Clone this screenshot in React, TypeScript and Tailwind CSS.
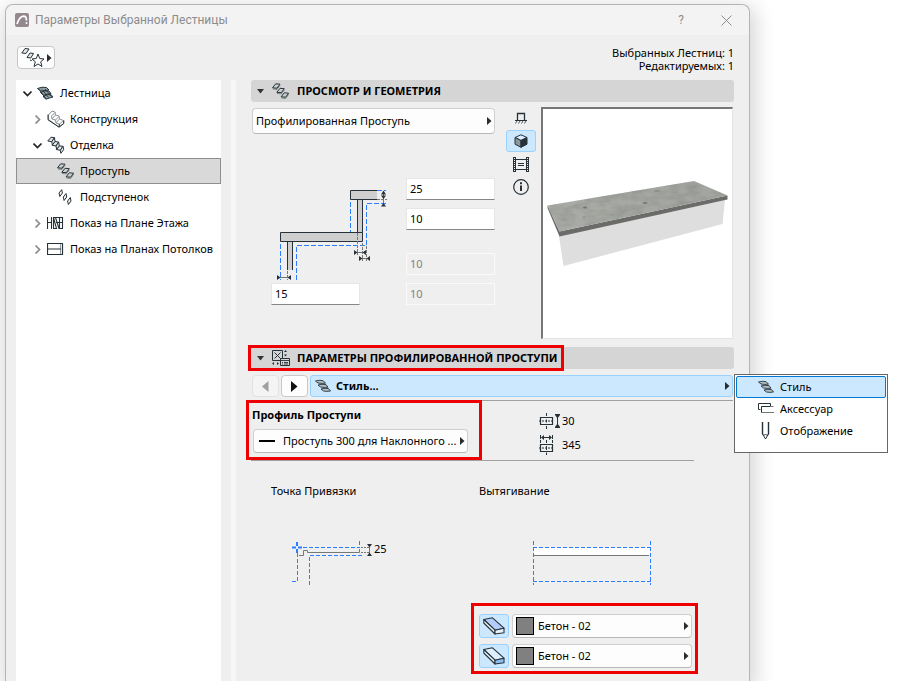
import React, { useState } from "react";

const INK = "#263238";
const BLUE = "#2b7fff";

type SvgProps = { className?: string };

function ArrowRight({ className = "" }: SvgProps) {
  return (
    <svg aria-hidden="true" width="5" height="8" viewBox="0 0 5 8" className={className}>
      <path d="M0 0 L4.5 4 L0 8 Z" fill="#2b2b2b" />
    </svg>
  );
}

function Caret({ open, dark }: { open: boolean; dark: boolean }) {
  return (
    <svg aria-hidden="true" width="10" height="10" viewBox="0 0 10 10" fill="none" stroke={dark ? "#222" : "#8a8a8a"} strokeWidth="1.7">
      {open ? <path d="M.5 3.5 L4.5 7.5 L8.5 3.5" /> : <path d="M2.500 1.500 L6.500 5.500 L2.500 9.500" />}
    </svg>
  );
}

function TreadIcon() {
  return (
    <svg aria-hidden="true" width="18" height="16" viewBox="0 0 18 16" fill="#c9cfcf" stroke={INK} strokeWidth="1" strokeLinejoin="round">
      <path d="M.5 4.800 L3.700 .8 L8 1.200 L5 5.200 Z M4.800 9.300 L8 5.300 L12.300 5.700 L9.300 9.700 Z M9.100 13.800 L12.300 9.800 L16.600 10.200 L13.600 14.200 Z" />
      <path d="M.8 6 L5 6.400 L8 2.500 M5 10.500 L9.300 10.900 L12.300 7 M9.400 15 L13.600 15.400 L16.600 11.500" fill="none" opacity=".5" />
    </svg>
  );
}

function RiserIcon() {
  return (
    <svg aria-hidden="true" width="18" height="16" viewBox="0 0 18 16" fill="#f4f4f4" stroke={INK} strokeWidth="1" strokeLinejoin="round">
      <path d="M2 4 L4.700 .7 L5.400 4 L2.800 7.500 Z M6.300 8 L9 4.500 L9.700 8 L7.100 11.500 Z M10.600 12 L13.300 8.500 L14 12 L11.400 15.500 Z" />
    </svg>
  );
}

function StairIcon() {
  return (
    <svg aria-hidden="true" width="18" height="14" viewBox="0 0 18 14" stroke={INK} strokeWidth="1" fill="#93a1a6">
      <path d="M.5 2.500 Q5 .5 9.500 1.500 L12 4 Q8 4.500 4 5.200 Z" />
      <path d="M3.500 6.500 Q8 4 12 5 L14 7.500 Q10 8 6.500 9.200 Z" />
      <path d="M6 10.500 Q10 7.700 14 8.700 L16 11 Q12 12 9 13.200 Z" />
      <path d="M2 3.500 L9 12.500 M8 3 L14.500 10.500 M5 3.500 L11.500 11.500" fill="none" strokeWidth=".9" />
    </svg>
  );
}

function StyleIcon() {
  return (
    <svg aria-hidden="true" width="18" height="14" viewBox="0 0 18 14" fill="#b4c0c6" stroke={INK} strokeWidth=".9">
      <path d="M.5 2 Q4 .8 8 1.600 L10.500 4.200 Q6 4.700 3 4 Z" />
      <path d="M3 6 Q7 4.800 11 5.600 L13 8.200 Q9 8.700 5.500 8 Z" />
      <path d="M6 10 Q10 8.800 13.500 9.600 L15.500 12 Q12 12.700 8.500 12 Z" />
    </svg>
  );
}

function StructureIcon() {
  return (
    <svg aria-hidden="true" width="18" height="18" viewBox="0 0 18 18" fill="#fff" stroke="#8d9395" strokeWidth="1">
      <path d="M1.500 5 L5 1 L8 2 L8.500 5 L12 6 L12.500 9 L16.500 10.500 V13.500 L12 17 L1.500 9.500 Z" />
      <path d="M4.500 6 L8 2.500 M4.500 6 L5 9 L8.500 10 L12 6.500 M8.500 5 L5 9 M8.500 10 L9 13 L12.500 14 L16.500 10.500 M12.500 9 L9 13" fill="none" />
      <path d="M1 4.500 V9.800 L12 17.200 L16.800 13.500 V10.500 M12.300 14 V17" fill="none" stroke={INK} />
    </svg>
  );
}

function FinishIcon() {
  return (
    <svg aria-hidden="true" width="18" height="18" viewBox="0 0 18 18" fill="#dfe4e5" stroke={INK} strokeWidth="1" strokeLinejoin="round">
      <path d="M.8 5 L4 1.200 L7.500 1.700 L4.800 5.700 Z M5 9.200 L8 5.500 L11.700 6 L9 10 Z M9.300 13.500 L12.300 9.800 L16 10.300 L13.300 14.300 Z" />
      <path d="M4.800 5.700 L7.500 1.700 L8 5.500 L5.300 9 Z M9 10 L11.700 6 L12.300 9.800 L9.600 13.300 Z M13.300 14.300 L16 10.300 L16.700 13.700 L13.800 17.300 Z" />
    </svg>
  );
}

function FloorPlanIcon() {
  return (
    <svg aria-hidden="true" width="18" height="12" viewBox="0 0 18 12" fill="none" stroke={INK} strokeWidth="1">
      <path d="M.5 0 V12 M4.500 0 V12 M0 5.500 H5 M6 .5 H15.500 V11.500 H11.500 M6.500 .5 V11.500 M6.500 .5 L9.500 11.500 H6 M8.500 .5 L12 11.500 M12.500 .5 V11.500 M9 5.500 H16" strokeWidth="1.100" />
    </svg>
  );
}

function CeilingPlanIcon() {
  return (
    <svg aria-hidden="true" width="18" height="12" viewBox="0 0 18 12" fill="none" stroke={INK} strokeWidth="1">
      <path d="M.5 .5 H15.500 V11.500 H.5 Z M.5 6 H14" strokeWidth="1.200" />
      <path d="M13.500 .5 V11.500" strokeDasharray="1 1" />
    </svg>
  );
}

function ParamsIcon() {
  return (
    <svg aria-hidden="true" width="18" height="17" viewBox="0 0 18 17" fill="none" stroke={INK} strokeWidth="1">
      <path d="M.5 .5 H10.500 V10.500 H.5 Z M2.500 2.500 L8.500 8.500 M8.500 2.500 L2.500 8.500" />
      <path d="M8.500 8.500 H17.500 V15.500 H8.500 Z" fill="#d5d5d5" />
      <path d="M8.500 10.500 H17.500 M10 12.500 H11 M12 12.500 H16 M10 14 H11 M12 14 H16" strokeWidth=".9" />
      <path d="M13.500 0 L15 2 H12 Z M13.500 6.500 L15 4.500 H12 Z M0 13.500 L2 12 V15 Z M7 13.500 L5 12 V15 Z" fill={INK} stroke="none" />
    </svg>
  );
}

function AccessoryIcon() {
  return (
    <svg aria-hidden="true" width="18" height="12" viewBox="0 0 18 12" fill="none" stroke={INK} strokeWidth="1">
      <path d="M12.500 3 V.5 H.5 V6.500 H2.500" />
      <path d="M15.500 3.500 H3.500 V9.500 H16" stroke="#727b7e" />
      <path d="M3.500 9.500 V3.500 H12" />
    </svg>
  );
}

function PencilIcon() {
  return (
    <svg aria-hidden="true" width="18" height="20" viewBox="0 0 18 20" fill="none" stroke={INK} strokeWidth="1">
      <path d="M4.500 1 V13 M10.500 1 V13" strokeWidth="1.400" />
      <path d="M4.500 13 L7.500 18 L10.500 13 L9 14.500 L7.500 13 L6 14.500 Z" />
    </svg>
  );
}

function SlabIcon({ top, side }: { top: string; side: string }) {
  return (
    <svg aria-hidden="true" width="22" height="18" viewBox="0 0 22 18" stroke={INK} strokeWidth="1.1" strokeLinejoin="round">
      <path d="M.8 2.500 L9.500 .8 L21 11.200 L12 13.200 Z" fill={top} />
      <path d="M.8 2.500 V6 L12 17 V13.200 Z" fill="#eef6fc" />
      <path d="M12 13.200 L21 11.200 V15.800 L12 17 Z" fill={side} />
    </svg>
  );
}

function HeightIcon() {
  return (
    <svg aria-hidden="true" width="22" height="16" viewBox="0 0 22 16" fill="none" stroke={INK} strokeWidth="1">
      <path d="M1.500 4.500 H13.500 V11.500 H1.500 Z" strokeWidth="1.200" />
      <path d="M7.500 0 V3 M7.500 13 V16 M7.500 6.500 V9.500" />
      <path d="M0 8 H15" strokeDasharray="2 1" />
      <path d="M16 1.500 H21 M16 14.500 H21 M18.500 5 V11" />
      <path d="M18.500 5.500 L16 2 H21 Z M18.500 10.500 L16 14 H21 Z" fill={INK} stroke="none" />
    </svg>
  );
}

function WidthIcon() {
  return (
    <svg aria-hidden="true" width="22" height="20" viewBox="0 0 22 20" fill="none" stroke={INK} strokeWidth="1">
      <path d="M1.500 9.500 H13.500 V16.500 H1.500 Z" strokeWidth="1.200" />
      <path d="M7.500 5 V8 M7.500 17.500 V20 M7.500 11 V15" />
      <path d="M0 13 H15" strokeDasharray="2 1" />
      <path d="M1.500 0 V8 M13.500 0 V8" strokeDasharray="4 1" />
      <path d="M4 2.500 H11" />
      <path d="M2 2.500 L5 0 V5 Z M13 2.500 L10 0 V5 Z" fill={INK} stroke="none" />
    </svg>
  );
}

type Option = { id: string; label: string; depth: number; caret?: "open" | "closed"; icon: React.ReactNode };

const TREE: Option[] = [
  { id: "stair", label: "Лестница", depth: 0, caret: "open", icon: <StairIcon /> },
  { id: "structure", label: "Конструкция", depth: 1, caret: "closed", icon: <StructureIcon /> },
  { id: "finish", label: "Отделка", depth: 1, caret: "open", icon: <FinishIcon /> },
  { id: "tread", label: "Проступь", depth: 2, icon: <TreadIcon /> },
  { id: "riser", label: "Подступенок", depth: 2, icon: <RiserIcon /> },
  { id: "floor", label: "Показ на Плане Этажа", depth: 1, caret: "closed", icon: <FloorPlanIcon /> },
  { id: "ceiling", label: "Показ на Планах Потолков", depth: 1, caret: "closed", icon: <CeilingPlanIcon /> },
];

const INDENT = ["pl-1.5", "pl-4", "pl-[26px]"];

function Tree() {
  const [selected, setSelected] = useState("tread");
  return (
    <nav aria-label="Разделы" className="w-[205px] shrink-0 bg-white">
      {TREE.map((item) => (
        <button
          key={item.id}
          type="button"
          onClick={() => setSelected(item.id)}
          className={`flex h-[26px] w-full items-center border text-left whitespace-nowrap ${INDENT[item.depth]} ${
            selected === item.id ? "border-[#8f8f8f] bg-[#d9d9d9]" : "border-transparent"
          }`}
        >
          <span className="w-[14px] shrink-0">
            {item.caret && <Caret open={item.caret === "open"} dark={item.caret === "open"} />}
          </span>
          <span className="flex w-[23px] shrink-0 items-center">{item.icon}</span>
          {item.label}
        </button>
      ))}
    </nav>
  );
}

function SectionHeader({ icon, children }: { icon: React.ReactNode; children: React.ReactNode }) {
  return (
    <h2 className="h-[22px] rounded-[3px] bg-[#d5d5d5] font-bold">
      <button type="button" className="flex h-full w-full items-center pl-1.5 text-left">
        <svg aria-hidden="true" width="8" height="5" viewBox="0 0 8 5" className="mr-[7px]">
          <path d="M0 0 H7 L3.500 4.500 Z" fill="#333" />
        </svg>
        <span className="flex w-[25px] items-center">{icon}</span>
        {children}
      </button>
    </h2>
  );
}

function Picker({
  label,
  value,
  className,
  pad,
  children,
}: {
  label: string;
  value: string;
  className: string;
  pad: string;
  children?: React.ReactNode;
}) {
  return (
    <div className={`relative flex items-center ${className}`}>
      <select
        aria-label={label}
        className={`h-full w-full appearance-none rounded border border-[#cfcfcf] border-b-[#b9b9b9] bg-[#fdfdfd] leading-4 ${pad}`}
      >
        <option>{value}</option>
      </select>
      {children}
      <ArrowRight className="pointer-events-none absolute right-[3px]" />
    </div>
  );
}

function NumberBox({ label, value, disabled = false }: { label: string; value: string; disabled?: boolean }) {
  return (
    <input
      aria-label={label}
      defaultValue={value}
      disabled={disabled}
      className="h-[22px] w-[89px] border border-[#e6e6e6] border-b-[#868686] bg-white px-[3px] pb-0.5 disabled:border-[#fafafa] disabled:bg-[#efefef] disabled:text-[#828282]"
    />
  );
}

function StairSection() {
  return (
    <svg role="img" aria-label="Сечение ступеней" width="120" height="105" viewBox="21 8 120 105" fill="none" strokeWidth="1">
      <path d="M107.500 29.500 V62.500 H112.500 V29.500" fill="#cfcfcf" stroke={INK} />
      <path d="M127 20.500 H100.500 V29.500 H127" fill="#cfcfcf" stroke={INK} />
      <path d="M37.500 100 V71.500 H42.500 V100" fill="#cfcfcf" stroke={INK} />
      <path d="M30.500 62.500 H112.500 V71.500 H30.500 Z" fill="#cfcfcf" stroke={INK} />
      <path d="M100.500 32 V62 M30.500 74 V110 M46.500 110 V75.500 H116.500 V33.500 H136 M127 20.500 H136" stroke={BLUE} strokeDasharray="5 2" />
      <path d="M107.500 63 V85 M112.500 73 V91 M116.500 76 V91 M37.500 101 V110 M127 29.500 H137" stroke="#777" strokeDasharray="3 1" />
      <path d="M107 82.500 H113 M112 88.500 H117 M30 107.500 H38 M133.500 22 V35" stroke="#777" />
      <g fill={INK}>
        <path d="M104 80 L107.500 82.500 L104 85 Z M116 80 L112.500 82.500 L116 85 Z" />
        <path d="M109 86 L112.500 88.500 L109 91 Z M120 86 L116.500 88.500 L120 91 Z" />
        <path d="M27 105 L30.500 107.500 L27 110 Z M41 105 L37.500 107.500 L41 110 Z" />
        <path d="M133.500 20.500 L136 24.500 H131 Z M133.500 29 L136 25.500 H131 Z M133.500 33 L136 36.500 H131 Z" />
      </g>
    </svg>
  );
}

function Preview() {
  return (
    <div className="h-[232px] w-[192px] border border-t-2 border-l-2 border-[#e3e3e3] border-t-[#777] border-l-[#777] bg-white">
      <svg role="img" aria-label="Трёхмерный вид проступи" width="189" height="229" viewBox="543 109 189 229">
        <defs>
          <linearGradient id="slab" x1="0" y1="0" x2="1" y2="0">
            <stop offset="0" stopColor="#aaada7" />
            <stop offset="1" stopColor="#a1a49f" />
          </linearGradient>
          <filter id="grain" x="0" y="0" width="1" height="1" colorInterpolationFilters="sRGB">
            <feTurbulence type="fractalNoise" baseFrequency="0.07 0.16" numOctaves="3" seed="4" />
            <feColorMatrix values="0 0 0 0 .5  0 0 0 0 .51  0 0 0 0 .49  .9 0 0 0 -.3" />
            <feComposite in2="SourceGraphic" operator="in" />
          </filter>
        </defs>
        <path d="M559 236 L725 200 L722.500 224 L563.500 266 Z" fill="#dedede" />
        <path d="M547.500 205.500 L559.500 231.500 L727.500 195.500 V199.500 L559.500 236.500 L547.500 208 Z" fill="#6b6b69" />
        <path d="M547.500 205.500 L694 181 L727.500 195.500 L559.500 231.500 Z" fill="url(#slab)" />
        <path d="M547.500 205.500 L694 181 L727.500 195.500 L559.500 231.500 Z" fill="#000" filter="url(#grain)" />
        <g fill="#666864">
          <ellipse cx="585" cy="207.500" rx="2" ry="1" opacity=".8" />
          <ellipse cx="645" cy="203" rx="2.500" ry="1.200" opacity=".6" />
          <ellipse cx="657" cy="191" rx="3" ry="1" opacity=".3" />
          <ellipse cx="584" cy="217" rx="1.500" ry=".8" opacity=".4" />
        </g>
      </svg>
    </div>
  );
}

function ViewModes() {
  const base = "flex h-[22px] w-[30px] items-center justify-center rounded-[3px] border";
  return (
    <div className="flex w-[30px] flex-col gap-px">
      <button type="button" aria-label="Вид сверху" className={`${base} border-transparent`}>
        <svg width="14" height="12" viewBox="0 0 14 12" fill="none" stroke={INK} strokeWidth="1">
          <path d="M3.500 8.500 V1.500 H10.500 V8.500" strokeWidth="1.300" />
          <path d="M1 8.500 H13" />
          <path d="M3 9 L1.500 11.500 M6 9 L4.500 11.500 M9 9 L7.500 11.500 M12 9 L10.500 11.500" strokeWidth=".8" />
        </svg>
      </button>
      <button type="button" aria-label="3D" aria-pressed="true" className={`${base} border-[#99d1ff] bg-[#cce8ff]`}>
        <svg width="14" height="14" viewBox="0 0 14 14" stroke={INK} strokeWidth="1" strokeLinejoin="round">
          <path d="M1 3.500 L7 .8 L13 3.500 L7 6.500 Z" fill="#dceeff" />
          <path d="M1 3.500 V10.200 L7 13.300 V6.500 Z" fill="#8a979c" />
          <path d="M13 3.500 V10.200 L7 13.300 V6.500 Z" fill={INK} />
        </svg>
      </button>
      <button type="button" aria-label="Кадр" className={`${base} border-transparent`}>
        <svg width="16" height="15" viewBox="0 0 16 15" fill="none" stroke={INK}>
          <path d="M.5 0 V15 M2.500 0 V15 M13.500 0 V15 M15.500 0 V15 M2.500 2.500 H13.500 M2.500 12.500 H13.500 M5 6.500 H11 M5 8.500 H11" />
          <path d="M1.500 0 V15 M14.500 0 V15" strokeDasharray="1 1" />
        </svg>
      </button>
      <button type="button" aria-label="Информация" className={`${base} border-transparent`}>
        <svg width="16" height="16" viewBox="0 0 16 16" className="shrink-0" fill="none" stroke={INK}>
          <circle cx="8" cy="8" r="7.300" strokeWidth="1.200" />
          <path d="M8 3.300 V5.200 M8 6.500 V12" strokeWidth="2" />
        </svg>
      </button>
    </div>
  );
}

function PageMenu() {
  const items = [
    { label: "Стиль", icon: <StyleIcon /> },
    { label: "Аксессуар", icon: <AccessoryIcon /> },
    { label: "Отображение", icon: <PencilIcon /> },
  ];
  return (
    <div role="menu" className="absolute -top-px left-full z-10 h-[79px] w-[154px] border border-[#666] bg-white p-px">
      {items.map((item, i) => (
        <button
          key={item.label}
          type="button"
          role="menuitem"
          className={`flex h-[22px] w-full items-center border pl-[21px] text-left ${
            i === 0 ? "rounded-[2px] border-[#0078d7] bg-[#cce8ff]" : "border-transparent"
          }`}
        >
          <span className="flex w-[22px] items-center">{item.icon}</span>
          {item.label}
        </button>
      ))}
    </div>
  );
}

function SurfaceRow({ label, top, side }: { label: string; top: string; side: string }) {
  return (
    <div className="flex h-6 items-center gap-[3px]">
      <button
        type="button"
        aria-label={label}
        className="flex h-6 w-[30px] items-center justify-center rounded-[3px] border border-[#99d1ff] bg-[#cce8ff]"
      >
        <SlabIcon top={top} side={side} />
      </button>
      <Picker label={label} value="Бетон - 02" className="h-6 w-[180px]" pad="pl-[25px]">
        <span className="pointer-events-none absolute left-1 size-[18px] border border-black bg-[#808080]" />
      </Picker>
    </div>
  );
}

function AnchorDrawing() {
  return (
    <svg role="img" aria-label="Точка привязки" width="83" height="46" viewBox="0 0 83 46" fill="none">
      <path d="M10 16.500 H14.500 V11.500 H18.500 V13.500 H70.500 V10" stroke="#777" />
      <path d="M14 8.500 H71 M70.500 2 V9 M8.500 14 V42.500 H1 M20.500 46 V16.500 H74" stroke={BLUE} strokeDasharray="4 2" />
      <path d="M8 3 V7 M8 10 V14 M3 8.500 H7 M9 8.500 H13" stroke={BLUE} strokeWidth="2" />
      <path d="M72 8.500 H80 M72 13.500 H80" stroke="#777" strokeDasharray="2 1" />
      <path d="M80.500 7 V15" stroke="#777" />
      <path d="M78 5 H83 L80.500 8.500 Z M78 17 H83 L80.500 13.500 Z" fill={INK} />
    </svg>
  );
}

function ExtrusionDrawing() {
  return (
    <svg role="img" aria-label="Вытягивание" width="120" height="46" viewBox="0 0 120 46" fill="none">
      <path d="M2 9 H118 V16 H2 Z" fill="#fff" />
      <path d="M2 16.500 H117" stroke="#777" />
      <path d="M1.500 2 V46 M118.500 2 V46 M1 8.500 H119 M1 42.500 H119" stroke={BLUE} strokeDasharray="4 2" />
    </svg>
  );
}

export default function App() {
  return (
    <main className="min-h-screen overflow-hidden bg-white pt-1 pr-[148px] pl-[5px] font-['Noto_Sans','Open_Sans',sans-serif] text-[11px] leading-[14px] text-black">
      <div className="flex min-h-[677px] flex-col rounded-t-lg border border-b-0 border-[#b4b4b4] bg-[#efefef] shadow-[2px_6px_20px_4px_rgba(0,0,0,0.16)]">
        <header className="flex h-[30px] items-center rounded-t-lg bg-[#f3f3f3] pl-[9px] font-['Roboto','Noto_Sans',sans-serif] text-[12px] text-[#8c8c8c]">
          <svg aria-hidden="true" width="14" height="14" viewBox="0 0 14 14" className="mr-1.5">
            <rect width="14" height="14" rx="2" fill="#92888d" />
            <path d="M2 11 Q4.500 3.500 8.500 3.200 Q11.500 3.200 11.500 7.500" fill="none" stroke="#fff" strokeWidth="1.700" />
            <circle cx="11.500" cy="10" r="1" fill="#fff" />
          </svg>
          <h1 className="flex-1 whitespace-nowrap">Параметры Выбранной Лестницы</h1>
          <button type="button" className="w-6">?</button>
          <button type="button" aria-label="Закрыть" className="mr-[17px] ml-7">
            <svg width="11" height="11" viewBox="0 0 11 11" stroke="#8c8c8c" fill="none">
              <path d="M.5 .5 L10.500 10.500 M10.500 .5 L.5 10.500" />
            </svg>
          </button>
        </header>

        <div className="flex h-[45px] items-start justify-between pt-[11px] pr-[15px] pl-[11px]">
          <button type="button" aria-label="Избранное" className="flex h-[23px] w-[38px] items-center rounded border border-[#c6c6c6] bg-[#fdfdfd] pl-[3px]">
            <svg width="24" height="21" viewBox="0 0 24 21" fill="none" stroke={INK} strokeWidth="1">
              <path d="M.8 6 L4 1.500 L8 2 L5 6.500 Z M6 10.500 L9 6 L12.500 6.500 L9.800 11 Z" fill="#e4e8e8" />
              <path d="M9 13 L11.500 14" strokeDasharray="2 1" />
              <path d="M17 7 L18.700 11.500 L23 12 L19.700 14.800 L21 19.500 L17 17 L13 19.500 L14.300 14.800 L11 12 L15.300 11.500 Z" fill="#fff" />
            </svg>
            <ArrowRight className="ml-0.5" />
          </button>
          <p className="text-right leading-[13px]">
            Выбранных Лестниц: 1<br />
            Редактируемых: 1
          </p>
        </div>

        <div className="flex flex-1 pl-2.5">
          <Tree />
          <div className="ml-[10px] w-[5px] shrink-0 bg-[#f7f7f7]" />

          <div className="ml-[15px] mr-[15px] min-w-0 flex-1">
            <SectionHeader icon={<TreadIcon />}>ПРОСМОТР И ГЕОМЕТРИЯ</SectionHeader>

            <section className="mt-[5px] flex pl-px">
              <div className="flex-1 pt-px">
                <Picker label="Тип проступи" value="Профилированная Проступь" className="h-[26px] w-[243px]" pad="pl-[3px]" />
                <div className="mt-11 flex gap-[15px] pl-[19px]">
                  <div className="flex w-[120px] flex-col">
                    <StairSection />
                    <NumberBox label="Отступ" value="15" />
                  </div>
                  <div className="flex flex-col gap-2">
                    <NumberBox label="Толщина проступи" value="25" />
                    <NumberBox label="Зазор" value="10" />
                    <div className="mt-[15px] flex flex-col gap-2">
                      <NumberBox label="Толщина подступенка" value="10" disabled />
                      <NumberBox label="Смещение" value="10" disabled />
                    </div>
                  </div>
                </div>
              </div>
              <ViewModes />
              <div className="mr-px ml-[5px]">
                <Preview />
              </div>
            </section>

            <div className="relative mt-2">
              <SectionHeader icon={<ParamsIcon />}>ПАРАМЕТРЫ ПРОФИЛИРОВАННОЙ ПРОСТУПИ</SectionHeader>
              <div className="pointer-events-none absolute -top-[2px] -left-[3px] h-[26px] w-[316px] border-3 border-[#ee0000]" />
            </div>

            <div className="relative mt-1.5 flex gap-0.5 pr-px pl-px">
              <button type="button" aria-label="Назад" disabled className="flex h-[22px] w-[27px] items-center justify-center rounded border border-[#e2e2e2] bg-[#f4f4f4]">
                <svg width="7" height="11" viewBox="0 0 7 11"><path d="M6.500 0 L0 5.500 L6.500 11 Z" fill="#a0a0a0" /></svg>
              </button>
              <button type="button" aria-label="Вперёд" className="flex h-[22px] w-[27px] items-center justify-center rounded border border-[#c9c9c9] bg-[#fdfdfd]">
                <svg width="7" height="11" viewBox="0 0 7 11"><path d="M0 0 L6.500 5.500 L0 11 Z" fill="#111" /></svg>
              </button>
              <button type="button" aria-haspopup="menu" className="flex h-[22px] flex-1 items-center rounded-[3px] border border-[#99d1ff] bg-[#cce8ff] pr-0.5 pl-1 text-left font-bold">
                <span className="flex w-[21px] items-center"><StyleIcon /></span>
                <span className="flex-1">Стиль...</span>
                <ArrowRight />
              </button>
              <PageMenu />
            </div>

            <section className="relative mt-[3px] mr-px flex h-[60px] border-t border-[#a0a0a0]">
              <div className="w-[286px] pt-[7px] pl-px">
                <h3 className="font-bold">Профиль Проступи</h3>
                <Picker label="Профиль Проступи" value="Проступь 300 для Наклонного ..." className="mt-[7px] ml-px h-6 w-[215px]" pad="pl-[29px]">
                  <span className="pointer-events-none absolute left-1.5 h-0.5 w-4 bg-black" />
                </Picker>
              </div>
              <div className="flex flex-col gap-1 pt-2.5">
                <div className="flex h-5 items-center gap-px pl-0.5"><HeightIcon />30</div>
                <div className="flex h-5 items-center gap-px pl-0.5"><WidthIcon />345</div>
              </div>
              <div className="pointer-events-none absolute -top-px -left-[5px] h-[60px] w-[236px] border-3 border-[#ee0000]" />
            </section>

            <section className="mr-10 flex border-t border-[#a0a0a0] pt-[23px]">
              <div className="w-[228px] shrink-0 pl-5">
                <h3>Точка Привязки</h3>
                <div className="mt-[41px] flex items-start gap-0.5 pl-[18px]">
                  <AnchorDrawing />
                  <span className="mt-[3px]">25</span>
                </div>
              </div>
              <div>
                <h3>Вытягивание</h3>
                <div className="mt-[41px] pl-[53px]">
                  <ExtrusionDrawing />
                </div>
                <div className="relative mt-[29px] flex flex-col gap-1.5">
                  <SurfaceRow label="Верхняя поверхность" top="#b3cdfb" side="#e6f3fd" />
                  <SurfaceRow label="Боковая поверхность" top="#dcefff" side="#8dc0f5" />
                  <div className="pointer-events-none absolute -top-[11px] -left-2 h-[71px] w-[227px] border-3 border-[#ee0000]" />
                </div>
              </div>
            </section>
          </div>
        </div>
      </div>
    </main>
  );
}
